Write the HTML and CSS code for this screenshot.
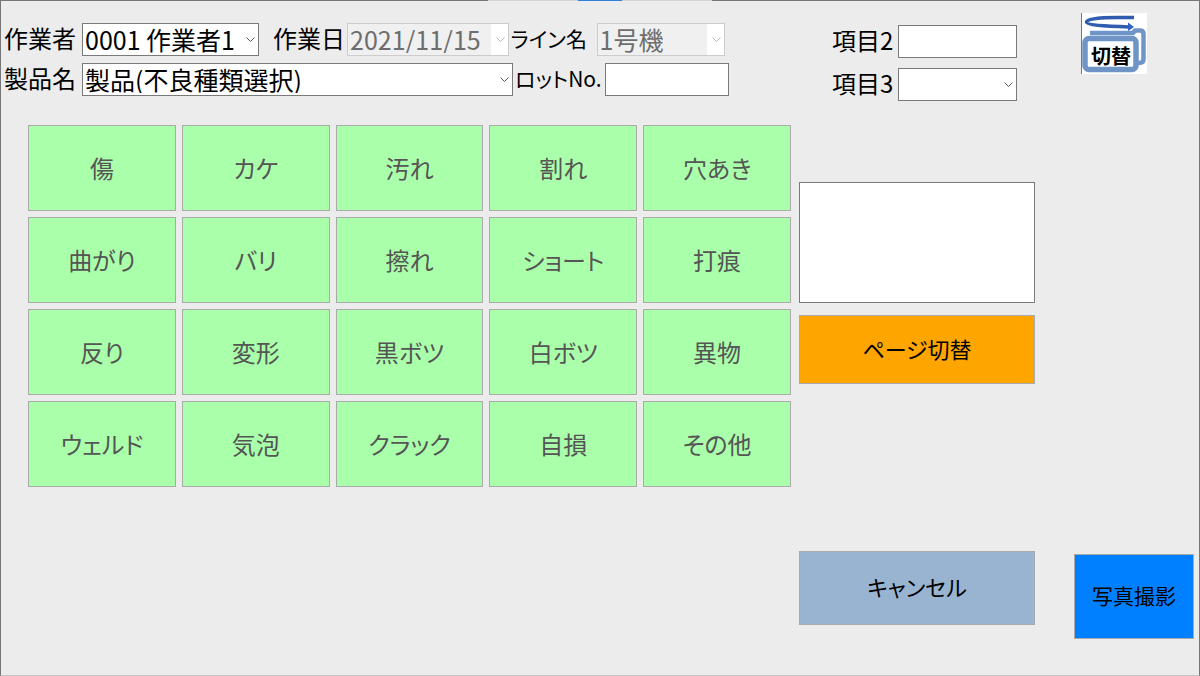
FILE: index.html
```
<!DOCTYPE html>
<html lang="ja">

<head>
    <meta charset="UTF-8">
    <meta name="viewport" content="width=device-width, initial-scale=1.0">
    <title>不良種類選択</title>
    <link rel="stylesheet" href="styles.css">
</head>

<body>
    <form class="screen">
        <div class="handle"></div>

        <div class="header">
            <div class="fields">
                <div class="row">
                    <label class="lead" for="worker">作業者</label>
                    <select id="worker" class="worker">
                        <option>0001 作業者1</option>
                    </select>
                    <label class="day" for="date">作業日</label>
                    <select id="date" class="date" disabled>
                        <option>2021/11/15</option>
                    </select>
                    <label class="line-name" for="line">ライン名</label>
                    <select id="line" class="line" disabled>
                        <option>1号機</option>
                    </select>
                </div>
                <div class="row">
                    <label class="lead" for="product">製品名</label>
                    <select id="product" class="product">
                        <option>製品(不良種類選択)</option>
                    </select>
                    <label class="lot-name" for="lot">ロットNo.</label>
                    <input id="lot" class="lot" type="text">
                </div>
            </div>

            <div class="items">
                <label for="item2">項目2</label>
                <input id="item2" type="text">
                <label for="item3">項目3</label>
                <select id="item3">
                    <option></option>
                </select>
            </div>

            <button type="button" class="switch">
                <svg viewBox="0 0 66 61" width="66" height="61">
                    <rect width="66" height="61" fill="#fff" />
                    <path d="M.5 0V61" stroke="#777" />
                    <path d="M9 20H52L54 17.500H59Q62.500 17.500 62.500 21V46Q62.500 50 58 50H56" fill="none" stroke="#6f95c9" stroke-width="4.500" />
                    <rect x="4" y="25.500" width="51" height="31" rx="4" fill="#fff" stroke="#6f95c6" stroke-width="5.500" />
                    <path d="M53 4.500H36C20 4.500 6 6 5.500 9C5.500 12 22 13 48 14" fill="none" stroke="#2f5cae" stroke-width="3.500" />
                    <path d="M47 9.500L53 14L47 18Z" fill="#2f62c4" />
                    <text x="30" y="51" text-anchor="middle" class="switch-text">切替</text>
                </svg>
            </button>
        </div>

        <div class="main">
            <div class="defects">
                <button type="button">傷</button>
                <button type="button">カケ</button>
                <button type="button">汚れ</button>
                <button type="button">割れ</button>
                <button type="button">穴あき</button>
                <button type="button">曲がり</button>
                <button type="button">バリ</button>
                <button type="button">擦れ</button>
                <button type="button">ショート</button>
                <button type="button">打痕</button>
                <button type="button">反り</button>
                <button type="button">変形</button>
                <button type="button">黒ボツ</button>
                <button type="button">白ボツ</button>
                <button type="button">異物</button>
                <button type="button">ウェルド</button>
                <button type="button">気泡</button>
                <button type="button">クラック</button>
                <button type="button">自損</button>
                <button type="button">その他</button>
            </div>

            <div class="side">
                <textarea aria-label="メモ"></textarea>
                <button type="button" class="page">ページ切替</button>
                <button type="button" class="cancel">キャンセル</button>
            </div>

            <button type="button" class="photo">写真撮影</button>
        </div>
    </form>
</body>

</html>
```

FILE: styles.css
```
* {
    box-sizing: border-box;
}

body {
    margin: 0;
    background-color: #ececec;
    font-family: 'Noto Sans CJK JP', sans-serif;
    font-size: 24px;
    line-height: 30px;
    font-feature-settings: "palt";
    color: black;
}

.screen {
    min-height: 100vh;
    border: 1px solid #777;
    border-bottom-color: #c4c4c4;
}

/* grab bar over the top edge */
.handle {
    position: absolute;
    top: 0;
    left: 50%;
    width: 224px;
    height: 1px;
    margin-left: -112px;
    background: linear-gradient(#2f80d8, #2f80d8) center / 44px 1px no-repeat #d4d4d4;
}

.header {
    display: grid;
    grid-template-columns: 725fr 224fr 66px;
    column-gap: 64px;
    align-items: start;
    height: 124px;
    padding: 12px 52px 0 3px;
}

.fields {
    display: flex;
    flex-direction: column;
    gap: 7px;
    padding-top: 10px;
}

.row {
    display: flex;
}

label {
    white-space: nowrap;
}

.lead {
    flex: 0 0 78px;
}

.day {
    flex: 0 0 74px;
}

.line-name {
    flex: 0 0 86px;
    font-size: 21px;
}

.lot-name {
    flex: 0 0 90px;
    font-size: 21px;
}

.worker {
    flex: 178;
    margin-right: 14px;
}

.date {
    flex: 162;
    margin-right: 2px;
}

.line {
    flex: 128;
    margin-right: 4px;
}

.product {
    flex: 434;
    margin-right: 2px;
}

.lot {
    flex: 122;
}

.items {
    display: grid;
    grid-template-columns: 66px 1fr;
    row-gap: 10px;
    margin-left: 39px;
    padding-top: 12px;
}

input,
select,
textarea {
    width: 100%;
    min-width: 0;
    margin: 0;
    border: 1px solid #7a7a7a;
    border-radius: 0;
    background-color: white;
    color: black;
    font: inherit;
    font-feature-settings: inherit;
}

input,
select {
    height: 33px;
    padding: 0 0 2px 2px;
    font-size: 25px;
}

select {
    appearance: none;
    background-image: url("data:image/svg+xml,%3Csvg xmlns='http://www.w3.org/2000/svg' width='9' height='6'%3E%3Cpath d='M.5 .5L4.500 4.500L8.500 .5' fill='none' stroke='%23555'/%3E%3C/svg%3E");
    background-repeat: no-repeat;
    background-position: right 3px center;
}

select:disabled {
    opacity: 1;
    border-color: #ccc;
    color: #6d6d6d;
    background-image: url("data:image/svg+xml,%3Csvg xmlns='http://www.w3.org/2000/svg' width='9' height='6'%3E%3Cpath d='M.5 .5L4.500 4.500L8.500 .5' fill='none' stroke='%23bbb'/%3E%3C/svg%3E"), linear-gradient(to left, white 17px, #f0f0f0 17px);
    background-position: right 3px center, 0 0;
}

button {
    margin: 0;
    padding: 0;
    border: 1px solid #aaa;
    font: inherit;
    font-feature-settings: inherit;
    color: black;
    cursor: pointer;
}

.switch {
    border: none;
    background: none;
    height: 61px;
}

.switch svg {
    display: block;
}

.switch-text {
    font-size: 20px;
    font-weight: bold;
}

.main {
    display: grid;
    grid-template-columns: 763fr 283fr 120fr;
    padding: 0 5px 36px 27px;
}

.defects {
    display: grid;
    grid-template-columns: repeat(5, 1fr);
    grid-auto-rows: 86px;
    gap: 6px;
    align-content: start;
}

.defects button {
    background-color: #aaffaa;
    color: #555;
}

.side {
    display: flex;
    flex-direction: column;
    margin: 57px 39px 14px 8px;
}

textarea {
    display: block;
    height: 121px;
    resize: none;
}

.page,
.cancel {
    padding-bottom: 4px;
    font-size: 22px;
}

.page {
    height: 69px;
    margin-top: 12px;
    background-color: #ffa500;
}

.cancel {
    height: 74px;
    margin-top: 167px;
    background-color: #99b4d1;
}

.photo {
    align-self: end;
    height: 85px;
    padding-bottom: 4px;
    background-color: #0080ff;
    font-size: 21px;
}
```
